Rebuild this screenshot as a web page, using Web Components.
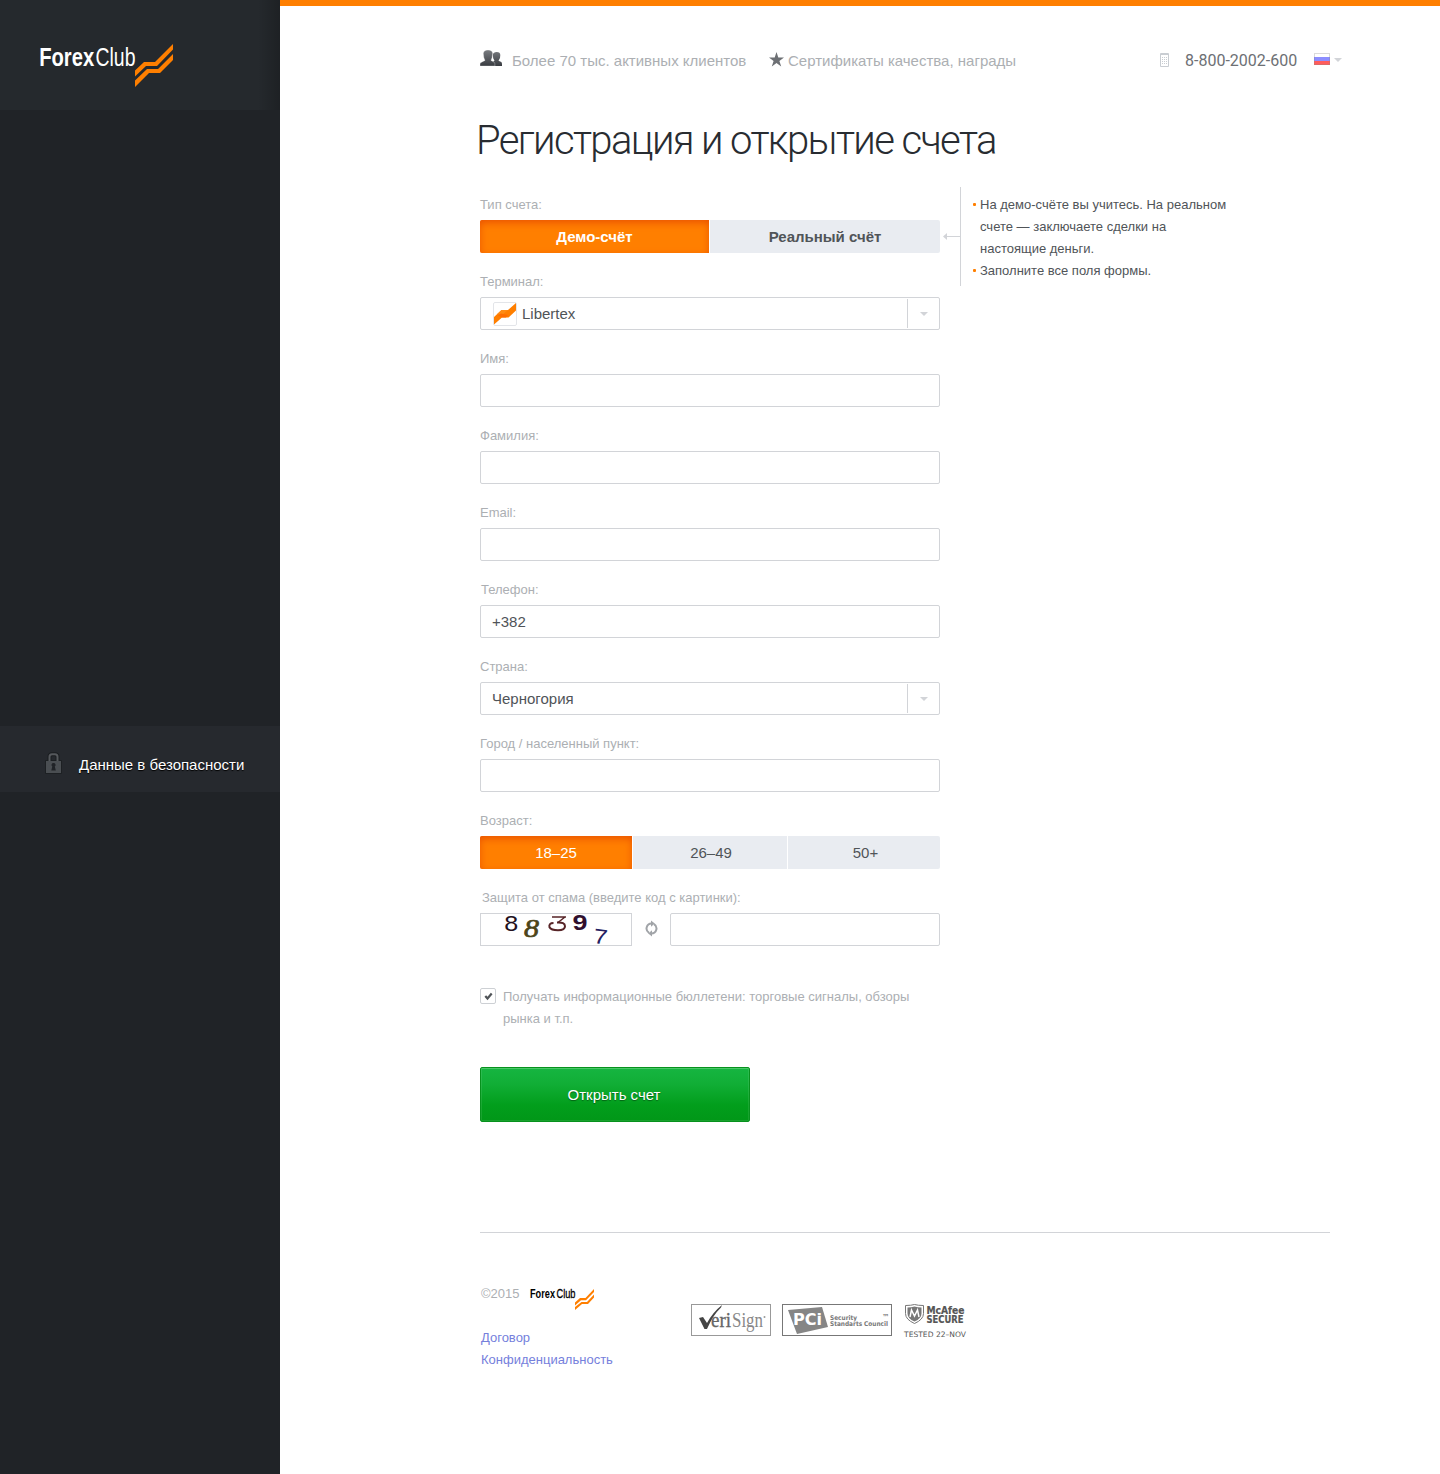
<!DOCTYPE html>
<html lang="ru">
<head>
<meta charset="utf-8">
<title>Регистрация и открытие счета</title>
<style>
body{margin:0;background:#fff;font-family:"Liberation Sans",Arial,sans-serif;font-size:13px;line-height:22px;color:#505458}
</style>
</head>
<body>
<fx-page></fx-page>
<script>
const define = (name, html) => {
  const t = document.createElement('template');
  t.innerHTML = html;
  customElements.define(name, class extends HTMLElement {
    constructor(){ super(); this.attachShadow({mode:'open'}).append(t.content.cloneNode(true)); }
  });
};

define('fx-logo', `<style>:host{display:block;width:134px;height:43px}svg{display:block;overflow:visible}</style>
<svg width="134" height="43" viewBox="0 0 134 43">
<text x="-.8" y="22" font-family="Liberation Sans" font-weight="700" font-size="25" fill="#fff" textLength="55" lengthAdjust="spacingAndGlyphs">Forex</text>
<text x="55.500" y="22" font-family="Liberation Sans" font-size="25.500" fill="#fff" textLength="40" lengthAdjust="spacingAndGlyphs">Club</text>
<path fill="#ff7f00" d="M95 26.500L104 18h11L133 0v5.500L117 22H106L95 32.500zM95 36.500L107 25h11L133 10v6L120 29H109L95 43z"/></svg>`);

define('fx-mini-logo', `<style>:host{display:block;width:66px;height:24px}svg{display:block;overflow:visible}</style>
<svg width="66" height="24" viewBox="0 0 66 24">
<text x="0" y="11" font-family="Liberation Sans" font-weight="700" font-size="12" fill="#000" textLength="25" lengthAdjust="spacingAndGlyphs">Forex</text>
<text x="26.500" y="11" font-family="Liberation Sans" font-size="12" fill="#000" stroke="#000" stroke-width=".3" textLength="19" lengthAdjust="spacingAndGlyphs">Club</text>
<path fill="#ff7f00" d="M45 15.500L50 11h5.500L64 2v3L56 13.200h-5L45 18.500zM45 20L51.500 15H57l7-7.500v3L58 17h-6l-7 6z"/></svg>`);

define('fx-sidebar', `<style>
:host{display:flex;flex-direction:column;width:280px;background:#202327}
.top{height:110px;box-sizing:border-box;padding:44px 0 0 40px;background:linear-gradient(90deg,#0000 258px,#0003 280px),linear-gradient(#25292d,#25292d)}
.safe{margin-top:616px;height:66px;background:#26292e;display:flex;gap:17px;padding-left:45px;box-sizing:border-box;width:280px;color:#fff;font-size:15px;align-items:flex-start;white-space:nowrap}
.safe svg{margin-top:26px}.safe span{margin-top:28px;text-shadow:0 1px 1px #000}
</style><div class="top"><fx-logo></fx-logo></div>
<div class="safe"><svg width="17" height="22" viewBox="0 0 17 22"><path d="M4.500 9V4.800Q4.500 2.300 7 2.300h3q2.500 0 2.500 2.500V9" fill="none" stroke="#1b1e21" stroke-width="4"/><rect x="0" y="8" width="17" height="14" rx="1" fill="#1d2023"/><path d="M4.500 9V4.800Q4.500 2.300 7 2.300h3q2.500 0 2.500 2.500V9" fill="none" stroke="#55585c" stroke-width="2"/><rect x="1" y="9" width="15" height="12" fill="#4a4e52"/><path d="M8.500 11a2 2 0 0 1 1.300 3.600l1 3.900H6.300l1-3.900A2 2 0 0 1 8.500 11z" fill="#202327"/></svg><span>Данные в безопасности</span></div>`);

define('fx-header', `<style>
:host{display:flex;height:22px;font-size:15px;color:#acafb3;white-space:nowrap}
svg{display:block;flex:none}.users{margin:0 10px 0 0}.star{margin:2px 4px 0 23px}
.phone{margin-left:auto;display:flex}.phone span{font:16px/22px Roboto,sans-serif;color:#6d7074;margin-left:16px;width:112px}
.pad{margin-top:3px}.flag{margin:3px 0 0 17px}.arr{margin:8px 0 0 4px}
.a{width:234px}.b{width:228px}
</style>
<svg class="users" width="22" height="17" viewBox="0 0 22 17"><defs><linearGradient id="g" gradientUnits="userSpaceOnUse" x1="0" y1="0" x2="0" y2="16"><stop stop-color="#7a7d81"/><stop offset="1" stop-color="#393c41"/></linearGradient></defs><path fill="url(#g)" d="M11 16v-3l3.500-2.200-1.300-2.500-.4-3.500Q13.300 2 16.700 2q3.600 0 3.600 3l-.3 3-1.500 2.800L21.300 12q.9.600.7 4z"/><path fill="url(#g)" stroke="#fff" stroke-width=".3" d="M0 16Q-.3 13 1 12.400l4-2L3.800 7.500l-.5-4Q3.500 0 8 0t4.700 3.500l-.6 4L11 10.400l3 1.600q1 .7 1 4z"/></svg>
<span class="a">Более 70 тыс. активных клиентов</span>
<svg class="star" width="15" height="15" viewBox="0 0 15 15"><path fill="#6d7074" d="M7.500 0l1.800 5.500H15l-4.600 3.400 1.800 5.600-4.700-3.500-4.700 3.500 1.800-5.600L0 5.500h5.700z"/></svg>
<span class="b">Сертификаты качества, награды</span>
<div class="phone"><svg class="pad" width="9" height="14" viewBox="0 0 9 14"><path fill="none" stroke="#c9cdd2" d="M.5.500h8v13h-8z"/><path stroke="#c9cdd2" d="M1 1.500h7"/><path stroke="#c9cdd2" stroke-dasharray="1 1" d="M2 4.500h5M2 6.500h5M2 8.500h5M2 10.500h5"/></svg>
<span>8-800-2002-600</span>
<svg class="flag" width="16" height="12" viewBox="0 0 16 12"><rect width="16" height="12" fill="#fff"/><rect y="4" width="16" height="4" fill="#8c8eff"/><rect y="8" width="16" height="4" fill="#ff5c5c"/><rect x=".5" y=".5" width="15" height="11" fill="none" stroke="#888" stroke-opacity=".3"/></svg>
<svg class="arr" width="8" height="4" viewBox="0 0 8 4"><path fill="#d2d4d8" d="M0 0h8L4 4z"/></svg></div>`);

define('fx-field', `<style>
:host{display:block;height:77px}.label{color:#acafb3;height:21px;margin-bottom:5px;padding:1px 0 0 var(--nudge,0px)}
</style><div class="label"><slot name="label"></slot></div><slot></slot>`);

define('fx-input', `<style>
:host{display:block;height:33px;box-sizing:border-box;border:1px solid #d2d4d8;border-radius:2px;padding:0 11px;font-size:15px;line-height:31px;color:#505458}
</style><slot></slot>`);

define('fx-select', `<style>
:host{display:flex;height:33px;box-sizing:border-box;border:1px solid #d2d4d8;border-radius:2px;padding:0 0 0 11px;font-size:15px;line-height:31px;color:#505458}
.v{flex:1;display:flex;align-items:center}.d{width:31px;height:29px;margin-top:1px;border-left:1px solid #d2d4d8;display:grid;place-items:center}
</style><div class="v"><slot></slot></div><div class="d"><svg width="8" height="4"><path fill="#d2d4d8" d="M0 0h8L4 4z"/></svg></div>`);

define('fx-libertex-icon', `<style>:host{display:block;width:24px;height:24px;margin:1px 5px 0 1px}svg{display:block}</style>
<svg width="24" height="24" viewBox="0 0 24 24"><rect x=".5" y=".5" width="23" height="23" rx="1.500" fill="#fff" stroke="#e3e5e9"/><path fill="#ff7f00" d="M1 15L8.500 8H15l8-7v7.500L15.500 15.500H9L1 22.500z"/><path fill="#ff8c14" d="M4 12.200L8.500 8H15l-5 4.200z"/><path fill="#ff6d00" d="M5 13.500L8 11.500l7 1.500-2 2.500H9z"/></svg>`);

define('fx-segments', `<style>
:host{display:flex;gap:1px;height:33px;font-size:15px;line-height:33px;text-align:center;border-radius:2px;overflow:hidden}
::slotted(*){flex:var(--w,1);box-sizing:border-box;background:#e9ecf1;color:#505458}
::slotted([on]){background:#ff7f00;color:#fff;box-shadow:inset 0 3px 8px -1px #e84e00}
</style><slot></slot>`);

define('fx-captcha', `<style>
:host{display:flex;height:33px}.pic{width:152px;height:33px;box-sizing:border-box;border:1px solid #d2d4d8}
.pic svg{display:block;overflow:visible}.re{margin:7px 12px 0 13px}fx-input{flex:1}
</style><div class="pic"><svg width="150" height="31" viewBox="0 0 150 31">
<text x="23.300" y="16.500" font-family="Liberation Sans" font-size="22" textLength="14" lengthAdjust="spacingAndGlyphs" fill="#231020">8</text>
<text x="43" y="23" font-family="Liberation Serif" font-style="italic" font-size="26" textLength="15" lengthAdjust="spacingAndGlyphs" fill="#4c4519" stroke="#4c4519" stroke-width=".7">8</text>
<path d="M71 3h14M84 3l-7 5.500" fill="none" stroke="#572427" stroke-width="1.500"/><path d="M76 8.500q8-.5 8 3.800 0 4-7 4-7 0-8.500-3Q67.500 9 72.500 9" fill="none" stroke="#572427" stroke-width="2"/>
<text x="91.500" y="16" font-family="Liberation Sans" font-weight="700" font-size="22" textLength="15" lengthAdjust="spacingAndGlyphs" fill="#31102f">9</text>
<text x="112.500" y="30" font-family="Liberation Sans" font-size="21" textLength="14" lengthAdjust="spacingAndGlyphs" transform="rotate(7 120 24)" fill="#242061">7</text></svg></div>
<svg class="re" width="13" height="17" viewBox="0 0 13 17"><g fill="none" stroke="#a1a4a8" stroke-width="2"><path d="M4 12.800A5 5 0 0 1 6.500 3.500M9 4.200A5 5 0 0 1 6.500 13.500"/></g><path fill="#a1a4a8" d="M6 .5l3.800 3L6 6.700zM7 10.300v6.200l-3.800-3z"/></svg><fx-input></fx-input>`);

define('fx-check', `<style>
:host{display:flex;gap:7px;color:#acafb3}.box{flex:none;width:16px;height:16px;margin-top:2px;box-sizing:border-box;border:1px solid #cdd0d4;border-radius:2px}svg{display:block}
</style><div class="box"><svg width="14" height="14"><path d="M4.300 7l2.200 2.500L10.700 4.500" fill="none" stroke="#505458" stroke-width="2.200"/></svg></div><div><slot></slot></div>`);

define('fx-button', `<style>
:host{display:block;box-sizing:border-box;width:270px;height:55px;line-height:53px;text-align:center;padding-right:2px;font-size:15px;color:#fff;text-shadow:0 1px 1px #0006;border:1px solid #07921d;border-radius:2px;background:linear-gradient(#16b541,#11ae36 30%,#029e1c 70%,#019718);box-shadow:inset 0 1px #4bc769,inset 0 0 0 1px #ffffff18}
</style><slot></slot>`);

define('fx-tips', `<style>
:host{display:block;position:relative;width:276px;height:99px;box-sizing:border-box;border-left:1px solid #d2d4d8;padding:7px 0 0 19px;align-self:start;margin-top:-6px;white-space:nowrap}
.arrow{position:absolute;left:-18px;top:46px}.i{position:relative}.i:before{content:"";position:absolute;left:-7px;top:9px;width:3px;height:3px;border-radius:1px;background:#ff7f00}
</style><svg class="arrow" width="17" height="7"><path d="M3 3.500h14" stroke="#d2d4d8"/><path d="M4 0v7L0 3.500z" fill="#d2d4d8"/></svg>
<div class="i">На демо-счёте вы учитесь. На реальном<br>счете — заключаете сделки на<br>настоящие деньги.</div><div class="i">Заполните все поля формы.</div>`);

define('fx-badges', `<style>:host{display:flex;margin-top:21px}svg{display:block;overflow:visible}.p{margin:0 12px 0 11px}</style>
<svg width="80" height="32"><rect x=".5" y=".5" width="79" height="31" fill="#fff" stroke="#999"/><path fill="#444" d="M8 14l4-1 4 6Q22 8 31 1l-1 2.500Q22 11 16 25h-2.500z"/><text x="20" y="23" font-family="Liberation Serif" font-size="20" textLength="20" lengthAdjust="spacingAndGlyphs" fill="#666" stroke="#666" stroke-width=".3">eri</text><text x="41" y="23" font-family="Liberation Serif" font-size="20" textLength="31" lengthAdjust="spacingAndGlyphs" fill="#888">Sign</text><circle cx="73.500" cy="13" r="1" fill="#999"/></svg>
<svg class="p" width="110" height="32"><rect x=".5" y=".5" width="109" height="31" fill="#fff" stroke="#777"/><path fill="#858585" d="M6 6l34-3 6 20-31 7z"/><text x="11" y="21" font-family="DejaVu Sans" font-weight="700" font-size="16" textLength="29" lengthAdjust="spacingAndGlyphs" fill="#fff">PCi</text><g font-family="DejaVu Sans" font-weight="700" fill="#777"><text x="48" y="16" font-size="6.500" textLength="27" lengthAdjust="spacingAndGlyphs">Security</text><text x="48" y="22" font-size="6.500" textLength="58" lengthAdjust="spacingAndGlyphs">Standarts Council</text><text x="100" y="16" font-size="8" textLength="7" lengthAdjust="spacingAndGlyphs">™</text></g></svg>
<svg width="63" height="36"><path fill="#fff" stroke="#777" d="M1.500 1.500Q7 1.500 10.500.500 14 1.500 19.500 1.500v8q0 6-9 10-9-4-9-10z"/><path fill="#777" d="M3.500 3.500q4 0 7-1 3 1 7 1v6q0 5-7 8-7-3-7-8z"/><path fill="none" stroke="#fff" stroke-width="1.500" d="M6 13l1.500-7 3 6 3-6L15 13"/><g font-family="DejaVu Sans" font-weight="700" fill="#555" stroke="#555" stroke-width=".2"><text x="22.500" y="10" font-size="10" textLength="38" lengthAdjust="spacingAndGlyphs">McAfee</text><text x="22.500" y="19" font-size="10" textLength="37" lengthAdjust="spacingAndGlyphs">SECURE</text></g><text x="0" y="33" font-family="DejaVu Sans" font-size="7.500" fill="#555" textLength="62" lengthAdjust="spacingAndGlyphs">TESTED 22–NOV</text></svg>`);

define('fx-footer', `<style>
:host{display:grid;grid-template-columns:211px auto;width:850px;border-top:1px solid #d2d4d8;padding-top:50px;align-items:start;box-sizing:border-box}
.c{display:flex;color:#acafb3;padding-left:1px;gap:10px;font-size:13px;height:22px}.c span{width:39px}.c fx-mini-logo{margin-top:4px}.l{color:#7580dc;padding-left:1px;margin-top:22px}
</style><div><div class="c"><span>©2015</span><fx-mini-logo></fx-mini-logo></div><div class="l">Договор<br>Конфиденциальность</div></div><fx-badges></fx-badges>`);

define('fx-page', `<style>
:host{display:grid;grid-template-columns:280px 1fr;min-height:1474px}
main{border-top:6px solid #ff7f00;padding:44px 98px 0 200px;min-width:0}
h1{font:300 40px/48px Roboto,sans-serif;letter-spacing:-1.62px;color:#282c31;margin:45px 0 28px -4px;white-space:nowrap}
.cols{display:grid;grid-template-columns:460px 276px;gap:20px}
fx-check{margin-top:23px}fx-button{margin:37px 0 110px}
</style><fx-sidebar></fx-sidebar><main><fx-header></fx-header><h1>Регистрация и открытие счета</h1>
<div class="cols"><form>
<fx-field><span slot="label">Тип счета:</span><fx-segments><b on style="--w:0 0 229px">Демо-счёт</b><b>Реальный счёт</b></fx-segments></fx-field>
<fx-field><span slot="label">Терминал:</span><fx-select><fx-libertex-icon></fx-libertex-icon>Libertex</fx-select></fx-field>
<fx-field><span slot="label">Имя:</span><fx-input></fx-input></fx-field>
<fx-field><span slot="label">Фамилия:</span><fx-input></fx-input></fx-field>
<fx-field><span slot="label">Email:</span><fx-input></fx-input></fx-field>
<fx-field style="--nudge:1px"><span slot="label">Телефон:</span><fx-input>+382</fx-input></fx-field>
<fx-field><span slot="label">Страна:</span><fx-select>Черногория</fx-select></fx-field>
<fx-field><span slot="label">Город / населенный пункт:</span><fx-input></fx-input></fx-field>
<fx-field><span slot="label">Возраст:</span><fx-segments><span on style="--w:0 0 152px">18–25</span><span style="--w:0 0 154px;padding-left:2px">26–49</span><span style="padding-left:3px">50+</span></fx-segments></fx-field>
<fx-field style="--nudge:2px"><span slot="label">Защита от спама (введите код с картинки):</span><fx-captcha></fx-captcha></fx-field>
<fx-check>Получать информационные бюллетени: торговые сигналы, обзоры рынка и т.п.</fx-check>
<fx-button>Открыть счет</fx-button></form><fx-tips></fx-tips></div>
<fx-footer></fx-footer></main>`);
</script>
</body>
</html>
